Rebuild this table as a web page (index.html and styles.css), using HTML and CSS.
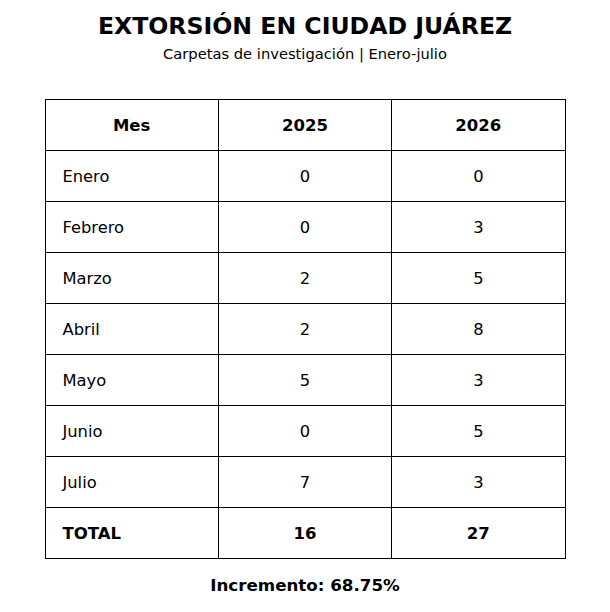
FILE: index.html
```html
<!DOCTYPE html>
<html lang="es">
<head>
<meta charset="utf-8">
<title>Extorsión en Ciudad Juárez</title>
<link rel="stylesheet" href="styles.css">
</head>
<body>
<div class="page">
  <h1 class="title">EXTORSIÓN EN CIUDAD JUÁREZ</h1>
  <p class="subtitle">Carpetas de investigación | Enero-julio</p>
  <table class="data">
    <thead>
      <tr><th class="c1">Mes</th><th>2025</th><th>2026</th></tr>
    </thead>
    <tbody>
      <tr><td class="month">Enero</td><td>0</td><td>0</td></tr>
      <tr><td class="month">Febrero</td><td>0</td><td>3</td></tr>
      <tr><td class="month">Marzo</td><td>2</td><td>5</td></tr>
      <tr><td class="month">Abril</td><td>2</td><td>8</td></tr>
      <tr><td class="month">Mayo</td><td>5</td><td>3</td></tr>
      <tr><td class="month">Junio</td><td>0</td><td>5</td></tr>
      <tr><td class="month">Julio</td><td>7</td><td>3</td></tr>
      <tr class="total"><td class="month">TOTAL</td><td>16</td><td>27</td></tr>
    </tbody>
  </table>
  <p class="note">Incremento: 68.75%</p>
</div>
</body>
</html>
```

FILE: styles.css
```css
html, body {
  margin: 0;
  padding: 0;
  background: #ffffff;
}
body {
  font-family: "DejaVu Sans", sans-serif;
  color: #000000;
}
.page {
  width: 610px;
  height: 612px;
  display: flex;
  flex-direction: column;
  align-items: center;
}
.title {
  margin: 11px 0 0 0;
  font-size: 23.6px;
  font-weight: bold;
  line-height: 30px;
}
.subtitle {
  margin: 3px 0 0 0;
  font-size: 14.7px;
  line-height: 20px;
}
.data {
  margin-top: 35px;
  border-collapse: collapse;
  table-layout: fixed;
  width: 521px;
}
.data th, .data td {
  border: 1px solid #000000;
  height: 50px;
  padding: 0;
  font-size: 16.3px;
  text-align: center;
  vertical-align: middle;
}
.data th {
  font-weight: bold;
  font-size: 16.5px;
}
.data td.month {
  text-align: left;
  padding-left: 17px;
}
.data tr.total td {
  font-weight: bold;
  font-size: 16.5px;
}
.note {
  margin: 14px 0 0 0;
  font-size: 16.7px;
  font-weight: bold;
  line-height: 24px;
}
```
